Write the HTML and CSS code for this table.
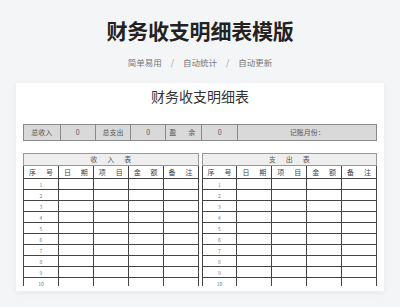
FILE: index.html
```html
<!DOCTYPE html>
<html lang="zh">
<head>
<meta charset="utf-8">
<link rel="stylesheet" href="styles.css">
</head>
<body>
<header class="hero">
  <h1 class="hero-title">财务收支明细表模版</h1>
  <p class="hero-sub"><span>简单易用</span><span class="sep">/</span><span>自动统计</span><span class="sep">/</span><span>自动更新</span></p>
</header>
<main class="card">
  <h2 class="sheet-title">财务收支明细表</h2>
  <div class="summary">
    <div class="s-cell">总收入</div>
    <div class="s-cell">0</div>
    <div class="s-cell">总支出</div>
    <div class="s-cell">0</div>
    <div class="s-cell pair pair-s"><span>盈</span><span>余</span></div>
    <div class="s-cell">0</div>
    <div class="s-cell">记账月份：</div>
  </div>
  <div class="tables">
    <table class="ledger">
      <colgroup><col><col><col><col><col></colgroup>
      <tr class="t-head"><th colspan="5">收入表</th></tr>
      <tr class="c-head"><th><div class="pair"><span>序</span><span>号</span></div></th><th><div class="pair"><span>日</span><span>期</span></div></th><th><div class="pair"><span>项</span><span>目</span></div></th><th><div class="pair"><span>金</span><span>额</span></div></th><th><div class="pair"><span>备</span><span>注</span></div></th></tr>
      <tr><td class="n">1</td><td></td><td></td><td></td><td></td></tr>
      <tr><td class="n">2</td><td></td><td></td><td></td><td></td></tr>
      <tr><td class="n">3</td><td></td><td></td><td></td><td></td></tr>
      <tr><td class="n">4</td><td></td><td></td><td></td><td></td></tr>
      <tr><td class="n">5</td><td></td><td></td><td></td><td></td></tr>
      <tr><td class="n">6</td><td></td><td></td><td></td><td></td></tr>
      <tr><td class="n">7</td><td></td><td></td><td></td><td></td></tr>
      <tr><td class="n">8</td><td></td><td></td><td></td><td></td></tr>
      <tr><td class="n">9</td><td></td><td></td><td></td><td></td></tr>
      <tr><td class="n">10</td><td></td><td></td><td></td><td></td></tr>
    </table>
    <table class="ledger">
      <colgroup><col><col><col><col><col></colgroup>
      <tr class="t-head"><th colspan="5">支出表</th></tr>
      <tr class="c-head"><th><div class="pair"><span>序</span><span>号</span></div></th><th><div class="pair"><span>日</span><span>期</span></div></th><th><div class="pair"><span>项</span><span>目</span></div></th><th><div class="pair"><span>金</span><span>额</span></div></th><th><div class="pair"><span>备</span><span>注</span></div></th></tr>
      <tr><td class="n">1</td><td></td><td></td><td></td><td></td></tr>
      <tr><td class="n">2</td><td></td><td></td><td></td><td></td></tr>
      <tr><td class="n">3</td><td></td><td></td><td></td><td></td></tr>
      <tr><td class="n">4</td><td></td><td></td><td></td><td></td></tr>
      <tr><td class="n">5</td><td></td><td></td><td></td><td></td></tr>
      <tr><td class="n">6</td><td></td><td></td><td></td><td></td></tr>
      <tr><td class="n">7</td><td></td><td></td><td></td><td></td></tr>
      <tr><td class="n">8</td><td></td><td></td><td></td><td></td></tr>
      <tr><td class="n">9</td><td></td><td></td><td></td><td></td></tr>
      <tr><td class="n">10</td><td></td><td></td><td></td><td></td></tr>
    </table>
  </div>
</main>
</body>
</html>
```

FILE: styles.css
```css
html, body {
  margin: 0;
  padding: 0;
}
body {
  width: 400px;
  height: 307px;
  overflow: hidden;
  background: #f4f5f7;
  font-family: "Noto Sans CJK SC", "Noto Sans", sans-serif;
}
.hero {
  padding-top: 15px;
  text-align: center;
}
.hero-title {
  margin: 0;
  font-size: 21px;
  line-height: 30px;
  font-weight: 700;
  color: #222;
  letter-spacing: -0.2px;
}
.hero-sub {
  margin: 9px 0 0;
  font-size: 8.5px;
  line-height: 16px;
  color: #777;
  display: flex;
  justify-content: center;
}
.hero-sub .sep {
  margin: 0 9px;
  color: #999;
}
.card {
  margin: 13px 16px 0;
  height: 208px;
  box-sizing: border-box;
  background: #fff;
  padding: 3px 7px 0;
  box-shadow: 0 2px 6px rgba(0, 0, 0, 0.06);
  overflow: hidden;
}
.sheet-title {
  margin: 0;
  font-size: 14px;
  line-height: 20px;
  font-weight: 400;
  text-align: center;
  color: #333;
}
.summary {
  margin-top: 18px;
  height: 17px;
  display: grid;
  grid-template-columns: 35.6px 35.4px 35px 35.3px 36px 36px 1fr;
  border: 1px solid #8a8a8a;
  box-sizing: border-box;
  background: #d9d9d9;
}
.s-cell {
  border-left: 1px solid #8a8a8a;
  font-size: 7px;
  line-height: 15px;
  text-align: center;
  color: #555;
  white-space: nowrap;
}
.s-cell:first-child {
  border-left: none;
}
.pair {
  display: flex;
  justify-content: space-between;
  padding: 0 5px;
  white-space: nowrap;
}
.pair-s {
  padding: 0 6px 0 3px;
}
.tables {
  margin-top: 12px;
  height: 133px;
  overflow: hidden;
  display: grid;
  grid-template-columns: 1fr 1fr;
  gap: 3px;
  align-items: start;
}
.ledger {
  width: 100%;
  border-collapse: collapse;
  table-layout: fixed;
  border: 1px solid #888;
}
.ledger th, .ledger td {
  padding: 0;
  border: 1px solid #444;
  text-align: center;
  color: #555;
  white-space: nowrap;
  overflow: hidden;
}
.t-head th {
  height: 11px;
  background: #eeeeee;
  border-color: #999;
  font-weight: 400;
  font-size: 7px;
  line-height: 11px;
  letter-spacing: 10px;
  text-indent: 10px;
  color: #555;
}
.c-head th {
  height: 12px;
  font-weight: 400;
  font-size: 7px;
  line-height: 12px;
  color: #444;
  border-top-color: #999;
}
.ledger td {
  height: 10px;
  font-size: 5px;
  line-height: 9px;
  color: #777;
}
```
